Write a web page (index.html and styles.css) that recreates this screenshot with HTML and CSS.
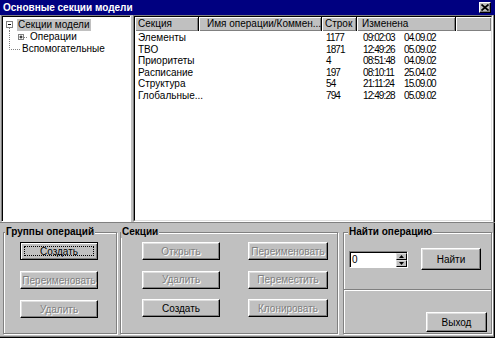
FILE: index.html
```html
<!DOCTYPE html>
<html lang="ru">
<head>
<meta charset="utf-8">
<link rel="stylesheet" href="styles.css">
</head>
<body>
<div class="win">
  <div class="title">
    <span class="title-text">Основные секции модели</span>
    <span class="close"><svg width="8" height="7" viewBox="0 0 8 7"><path d="M0.5 0.5 L7.5 6.5 M7.5 0.5 L0.5 6.5" stroke="#000" stroke-width="1.7"/></svg></span>
  </div>
  <div class="main">
    <div class="tree">
      <div class="node">
        <svg class="tl" width="14" height="12" viewBox="0 0 14 12">
          <rect x="3.5" y="2.5" width="6" height="6" fill="#fff" stroke="#808080"/>
          <path d="M5 5.5 H8" stroke="#000"/>
          <path d="M6.5 9 V12" stroke="#808080" stroke-dasharray="1 1"/>
        </svg>
        <span class="lbl sel">Секции модели</span>
      </div>
      <div class="node">
        <svg class="tl" width="26" height="12" viewBox="0 0 26 12">
          <path d="M6.5 0 V12" stroke="#808080" stroke-dasharray="1 1"/>
          <rect x="15.5" y="3.5" width="5" height="5" fill="#fff" stroke="#808080"/>
          <path d="M16.5 6 H19.5 M18 4.5 V7.5" stroke="#000" stroke-width="1"/>
          <path d="M21 6.5 H25" stroke="#808080" stroke-dasharray="1 1"/>
        </svg>
        <span class="lbl">Операции</span>
      </div>
      <div class="node">
        <svg class="tl" width="18" height="12" viewBox="0 0 18 12">
          <path d="M6.5 0 V6.5 H17" fill="none" stroke="#808080" stroke-dasharray="1 1"/>
        </svg>
        <span class="lbl">Вспомогательные</span>
      </div>
    </div>
    <div class="list">
      <div class="list-in">
        <div class="hdr">
          <div class="hc c1">Секция</div>
          <div class="hc c2">Имя операции/Коммен...</div>
          <div class="hc c3">Строк</div>
          <div class="hc c4">Изменена</div>
          <div class="hc c5"></div>
        </div>
        <div class="rows">
          <div class="row"><span class="c1">Элементы</span><span class="c2"></span><span class="c3 num">1177</span><span class="c4 num"><span class="tm">09:02:03</span><span>04.09.02</span></span></div>
          <div class="row"><span class="c1">ТВО</span><span class="c2"></span><span class="c3 num">1871</span><span class="c4 num"><span class="tm">12:49:26</span><span>05.09.02</span></span></div>
          <div class="row"><span class="c1">Приоритеты</span><span class="c2"></span><span class="c3 num">4</span><span class="c4 num"><span class="tm">08:51:48</span><span>04.09.02</span></span></div>
          <div class="row"><span class="c1">Расписание</span><span class="c2"></span><span class="c3 num">197</span><span class="c4 num"><span class="tm">08:10:11</span><span>25.04.02</span></span></div>
          <div class="row"><span class="c1">Структура</span><span class="c2"></span><span class="c3 num">54</span><span class="c4 num"><span class="tm">21:11:24</span><span>15.09.00</span></span></div>
          <div class="row"><span class="c1">Глобальные...</span><span class="c2"></span><span class="c3 num">794</span><span class="c4 num"><span class="tm">12:49:28</span><span>05.09.02</span></span></div>
        </div>
      </div>
    </div>
  </div>
  <div class="bottom">
    <fieldset class="grp g1">
      <legend>Группы операций</legend>
      <div class="g1-in">
        <button class="btn def"><span class="focus">Создать</span></button>
        <button class="btn dis">Переименовать</button>
        <button class="btn dis">Удалить</button>
      </div>
    </fieldset>
    <fieldset class="grp g2">
      <legend>Секции</legend>
      <div class="g2-in">
        <button class="btn dis">Открыть</button>
        <button class="btn wide dis">Переименовать</button>
        <button class="btn dis">Удалить</button>
        <button class="btn wide dis">Переместить</button>
        <button class="btn">Создать</button>
        <button class="btn wide dis">Клонировать</button>
      </div>
    </fieldset>
    <div class="rcol">
      <fieldset class="grp g3">
        <legend>Найти операцию</legend>
        <div class="g3-in">
          <div class="spin">
            <span class="spin-val">0</span>
            <span class="spin-btns">
              <span class="sb"><svg width="5" height="3" viewBox="0 0 5 3"><path d="M2.5 0 L5 3 H0 Z" fill="#000"/></svg></span>
              <span class="sb"><svg width="5" height="3" viewBox="0 0 5 3"><path d="M0 0 H5 L2.5 3 Z" fill="#000"/></svg></span>
            </span>
          </div>
          <button class="btn find">Найти</button>
        </div>
      </fieldset>
      <div class="exit-panel">
        <button class="btn exit">Выход</button>
      </div>
    </div>
  </div>
</div>
</body>
</html>
```
FILE: styles.css
```css
* { box-sizing: border-box; }
html, body { margin: 0; padding: 0; }
body {
  width: 495px;
  height: 338px;
  overflow: hidden;
  background: #c0c0c0;
  font-family: "Liberation Sans", Arial, sans-serif;
  font-size: 10px;
  color: #000;
}
.win {
  width: 495px;
  height: 338px;
  display: flex;
  flex-direction: column;
  background: #c0c0c0;
  box-shadow: inset -1px -1px 0 #000, inset -2px -2px 0 #808080;
}
.title {
  height: 15px;
  flex: none;
  background: #000080;
  color: #fff;
  font-weight: bold;
  font-size: 10px;
  display: flex;
  align-items: center;
  justify-content: space-between;
  padding: 0 4px 0 3px;
}
.close {
  width: 12px;
  height: 11px;
  background: #c0c0c0;
  border: 1px solid;
  border-color: #fff #000 #000 #fff;
  box-shadow: inset -1px -1px 0 #808080;
  display: flex;
  align-items: center;
  justify-content: center;
}
.close svg { display: block; }
.main {
  height: 207px;
  flex: none;
  display: flex;
  padding: 0 2px 0 1px;
}
.tree {
  width: 130px;
  flex: none;
  background: #fff;
  border: 1px solid;
  border-color: #808080 #fff #fff #808080;
  box-shadow: inset 1px 1px 0 #000;
  padding: 3px 0 0 1px;
}
.node {
  height: 12px;
  display: flex;
  align-items: center;
  white-space: nowrap;
}
.tl { display: block; flex: none; }
.lbl { line-height: 12px; padding: 0 1px; }
.sel { background: #c0c0c0; }
.list {
  flex: 1;
  margin-left: 2px;
  border: 1px solid;
  border-color: #808080 #fff #fff #808080;
  display: flex;
}
.list-in {
  flex: 1;
  background: #fff;
  border: 1px solid;
  border-color: #000 #dfdfdf #dfdfdf #000;
  display: flex;
  flex-direction: column;
}
.hdr {
  height: 14px;
  display: flex;
  flex: none;
}
.hc {
  height: 14px;
  line-height: 14px;
  background: #c0c0c0;
  border-right: 1px solid #000;
  box-shadow: inset 1px 1px 0 #fff, inset -1px -1px 0 #808080;
  white-space: nowrap;
  overflow: hidden;
}
.c1 { width: 64px; padding-left: 3px; flex: none; }
.c2 { width: 123px; padding-left: 8px; flex: none; }
.c3 { width: 35px; padding-left: 3px; flex: none; }
.c4 { width: 99px; padding-left: 5px; flex: none; }
.hc.c5 { flex: 1; border-right: none; }
.rows { padding-top: 1px; }
.row {
  display: flex;
  height: 11.6px;
  line-height: 11.6px;
  white-space: nowrap;
}
.row .c3 { padding-left: 4px; }
.row .c4 { padding-left: 6px; display: flex; }
.num { font-size: 10px; letter-spacing: -0.9px; }
.tm { width: 41px; flex: none; }
.bottom {
  flex: 1;
  display: flex;
  border-top: 1px solid #808080;
  padding: 3px 3px 0 3px;
}
.grp {
  margin: 0;
  padding: 0;
  min-width: 0;
  border: 1px solid #808080;
  box-shadow: 1px 1px 0 #fff, inset 1px 1px 0 #fff;
}
.grp legend {
  font-weight: bold;
  line-height: 12px;
  padding: 0 1px;
  background: #c0c0c0;
}
.g1 { width: 114px; height: 108px; }
.g1 legend { margin-left: 1px; }
.g1-in {
  display: flex;
  flex-direction: column;
  gap: 11px;
  padding: 4px 0 0 16px;
}
.g2 { width: 218px; height: 108px; margin-left: 3px; }
.g2 legend { margin-left: 0; }
.g2-in {
  display: grid;
  grid-template-columns: 78px 80px;
  column-gap: 28px;
  row-gap: 10.5px;
  padding: 4px 0 0 21px;
}
.rcol {
  width: 149px;
  margin-left: 5px;
  display: flex;
  flex-direction: column;
}
.g3 { height: 64px; flex: none; }
.g3 legend { margin-left: 4px; }
.g3-in {
  display: flex;
  align-items: center;
  padding: 10px 0 0 5px;
}
.exit-panel {
  height: 44px;
  flex: none;
  border: 1px solid #808080;
  border-top: none;
  box-shadow: 1px 1px 0 #fff, inset 1px 0 0 #fff;
  display: flex;
  justify-content: flex-end;
  align-items: flex-end;
  padding: 0 4px 0 0;
}
.btn {
  width: 78px;
  height: 18px;
  margin: 0;
  padding: 0;
  font-family: "Liberation Sans", Arial, sans-serif;
  font-size: 10px;
  color: #000;
  background: #c0c0c0;
  border: 1px solid;
  border-color: #fff #000 #000 #fff;
  border-radius: 0;
  box-shadow: inset -1px -1px 0 #808080, inset 1px 1px 0 #dfdfdf;
  white-space: nowrap;
  overflow: hidden;
  position: relative;
  appearance: none;
}
.btn.wide { width: 80px; }
.btn.dis { color: #808080; text-shadow: 1px 1px 0 #fff; }
.btn.def {
  border-color: #000;
  box-shadow: inset 1px 1px 0 #fff, inset -1px -1px 0 #808080;
}
.btn.def .focus::after {
  content: "";
  position: absolute;
  left: 3px;
  top: 3px;
  right: 3px;
  bottom: 3px;
  border: 1px dotted #000;
}
.spin {
  width: 59px;
  height: 17px;
  flex: none;
  display: flex;
  background: #fff;
  border: 1px solid;
  border-color: #808080 #fff #fff #808080;
  box-shadow: inset 1px 1px 0 #000;
}
.spin-val { flex: 1; padding: 2px 0 0 2px; line-height: 11px; }
.spin-btns {
  width: 11px;
  display: flex;
  flex-direction: column;
  padding: 1px 0 0 0;
}
.sb {
  flex: 1;
  background: #c0c0c0;
  border: 1px solid;
  border-color: #dfdfdf #000 #000 #dfdfdf;
  display: flex;
  align-items: center;
  justify-content: center;
}
.sb svg { display: block; }
.btn.find { width: 60px; height: 22px; margin-left: 13px; }
.btn.exit { width: 61px; height: 20px; margin-bottom: 1px; }
```
